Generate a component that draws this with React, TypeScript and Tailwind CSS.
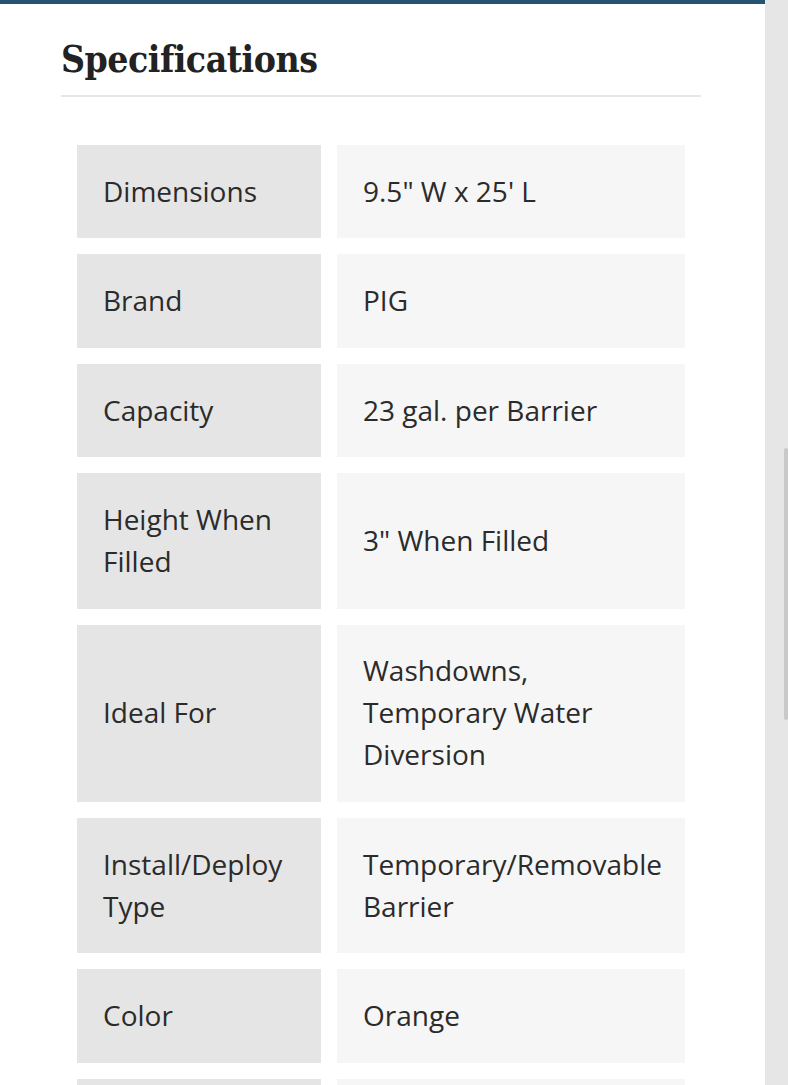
const specs: { label: string; value: string }[] = [
  { label: 'Dimensions', value: '9.5" W x 25\' L' },
  { label: 'Brand', value: 'PIG' },
  { label: 'Capacity', value: '23 gal. per Barrier' },
  { label: 'Height When Filled', value: '3" When Filled' },
  { label: 'Ideal For', value: 'Washdowns, Temporary Water Diversion' },
  { label: 'Install/Deploy Type', value: 'Temporary/Removable Barrier' },
  { label: 'Color', value: 'Orange' },
];

export default function App() {
  return (
    <div className="flex h-[1085px] w-[788px] overflow-hidden bg-white">
      {/* Page */}
      <div className="flex-1">
        <div className="h-[4px] bg-[#245470]" />
        <div className="pl-[61px] pr-[64px]">
          <h2
            className="border-b-2 border-[#e6e6e6] pt-[33px] pb-[13px] text-[37px] leading-[45px] font-bold text-[#222] tracking-[-0.5px]"
            style={{ fontFamily: '"DejaVu Serif Condensed", "DejaVu Serif", serif' }}
          >
            Specifications
          </h2>

          {/* Specs grid */}
          <div
            className="mt-[32px] grid grid-cols-[244px_348px] gap-4 p-4 text-[28px] leading-[42px] text-[#2b2b2b]"
            style={{ fontFamily: '"Open Sans", "Noto Sans", sans-serif' }}
          >
            {specs.map((s) => (
              <div key={s.label} className="contents">
                <div className="bg-[#e5e5e5] px-[26px] pt-[24.8px] pb-[26.6px] flex items-center">{s.label}</div>
                <div className="bg-[#f6f6f6] px-[26px] pt-[24.8px] pb-[26.6px] flex items-center">{s.value}</div>
              </div>
            ))}
            {/* next row, below the fold */}
            <div className="h-[93px] bg-[#e5e5e5]" />
            <div className="h-[93px] bg-[#f6f6f6]" />
          </div>
        </div>
      </div>

      {/* Scrollbar */}
      <div className="w-[24px] bg-[#e6e6e6] pt-[448px] pl-[19px]">
        <div className="h-[272px] w-[4px] rounded-full bg-[#c9c9c9]" />
      </div>
    </div>
  );
}
